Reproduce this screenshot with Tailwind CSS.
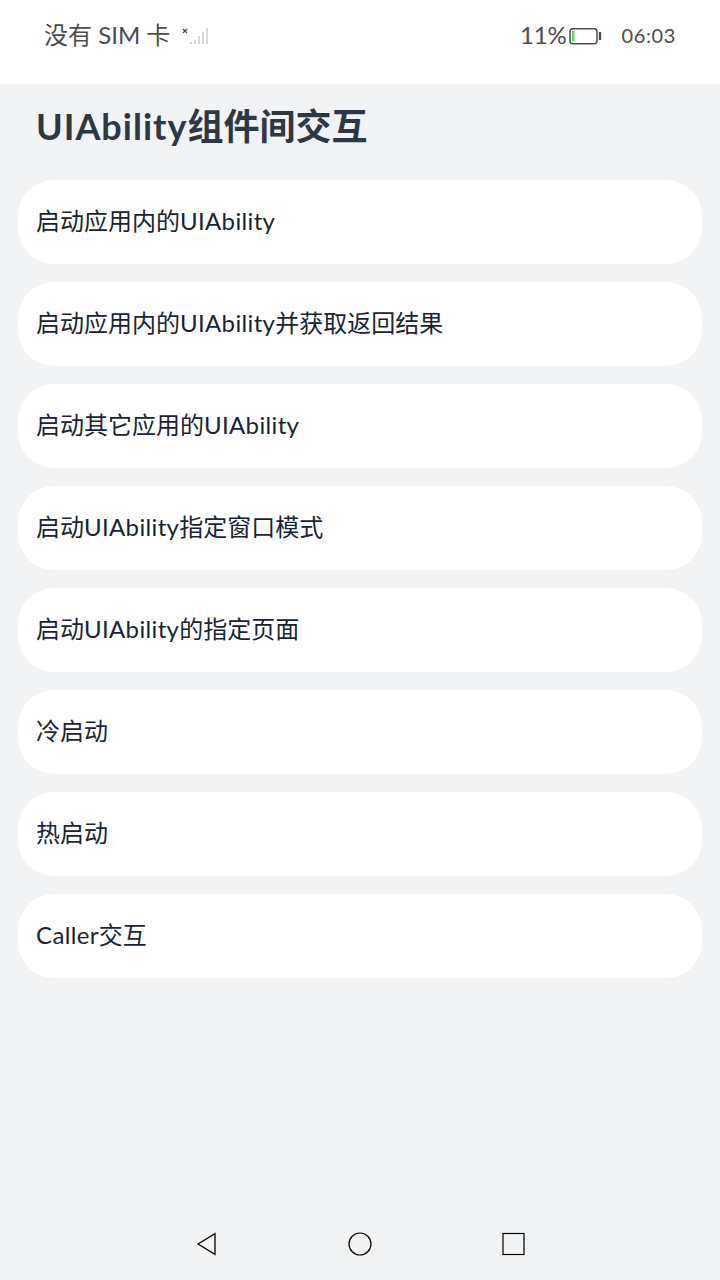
<!DOCTYPE html>
<html lang="zh-CN">
<head>
<meta charset="utf-8">
<title>UIAbility组件间交互</title>
<script src="https://cdn.jsdelivr.net/npm/@tailwindcss/browser@4"></script>
</head>
<body class="flex h-[1280px] w-[720px] flex-col overflow-hidden bg-[#f1f3f5] font-['Lato','Noto_Sans_CJK_SC',sans-serif] text-[#182431]">
<header class="flex h-[84px] items-start justify-between bg-white pl-11 pr-11 pt-3 text-[#4c4c4c]">
  <div class="flex h-12 items-center">
    <span class="whitespace-nowrap pb-0.5 text-2xl">没有 SIM 卡</span>
    <svg class="ml-3" width="28" height="20" viewBox="0 0 28 20" fill="none">
      <path d="M1 3l4 4M5 3l-4 4" stroke="#444" stroke-width="1.200"/>
      <path d="M9 16v2M13 13.500v4.500M17 10v8M21 6v12M25 2v16" stroke="#d9d9d9" stroke-width="2"/>
    </svg>
  </div>
  <div class="flex h-12 items-center">
    <span class="pb-0.5 text-2xl tracking-[-0.2px]">11%</span>
    <svg class="ml-0.5" width="33" height="18" viewBox="0 0 33 18" fill="none">
      <rect x="1" y="1.700" width="27" height="15" rx="3" stroke="#4c4c4c" stroke-width="1.500"/>
      <rect x="3" y="4" width="2.500" height="10.500" fill="#55e35a"/>
      <path d="M31 5v8" stroke="#4c4c4c" stroke-width="2.300"/>
    </svg>
    <span class="ml-5 pb-0.5 text-[20px] tracking-[0.6px]">06:03</span>
  </div>
</header>
<main class="flex flex-1 flex-col px-[18px]">
  <h1 class="flex h-[84px] items-center pl-[18px] text-4xl font-bold opacity-90"><span class="tracking-[1px]">UIAbility</span><span>组件间交互</span></h1>
  <ul class="mt-3 flex flex-col gap-[18px] text-2xl">
    <li class="flex h-[84px] items-center rounded-[36px] bg-white pb-0.5 pl-[18px]"><span>启动应用内的</span><span class="tracking-[0.35px]">UIAbility</span></li>
    <li class="flex h-[84px] items-center rounded-[36px] bg-white pb-0.5 pl-[18px]"><span>启动应用内的</span><span class="tracking-[0.35px]">UIAbility</span><span>并获取返回结果</span></li>
    <li class="flex h-[84px] items-center rounded-[36px] bg-white pb-0.5 pl-[18px]"><span>启动其它应用的</span><span class="tracking-[0.35px]">UIAbility</span></li>
    <li class="flex h-[84px] items-center rounded-[36px] bg-white pb-0.5 pl-[18px]"><span>启动</span><span class="tracking-[0.35px]">UIAbility</span><span>指定窗口模式</span></li>
    <li class="flex h-[84px] items-center rounded-[36px] bg-white pb-0.5 pl-[18px]"><span>启动</span><span class="tracking-[0.35px]">UIAbility</span><span>的指定页面</span></li>
    <li class="flex h-[84px] items-center rounded-[36px] bg-white pb-0.5 pl-[18px]">冷启动</li>
    <li class="flex h-[84px] items-center rounded-[36px] bg-white pb-0.5 pl-[18px]">热启动</li>
    <li class="flex h-[84px] items-center rounded-[36px] bg-white pb-0.5 pl-[18px]"><span class="tracking-[0.35px]">Caller</span><span>交互</span></li>
  </ul>
</main>
<nav class="flex h-[72px] items-center justify-center gap-[129px]">
  <svg width="24" height="24" viewBox="0 0 24 24" fill="none" stroke="#000" stroke-width="1.300"><path d="M3 12L20 1.700v20.600z"/></svg>
  <svg width="24" height="24" viewBox="0 0 24 24" fill="none" stroke="#000" stroke-width="1.200"><circle cx="12" cy="12" r="11"/></svg>
  <svg width="24" height="24" viewBox="0 0 24 24" fill="none" stroke="#000" stroke-width="1.200"><rect x="2" y="1.500" width="21" height="21"/></svg>
</nav>
</body>
</html>
